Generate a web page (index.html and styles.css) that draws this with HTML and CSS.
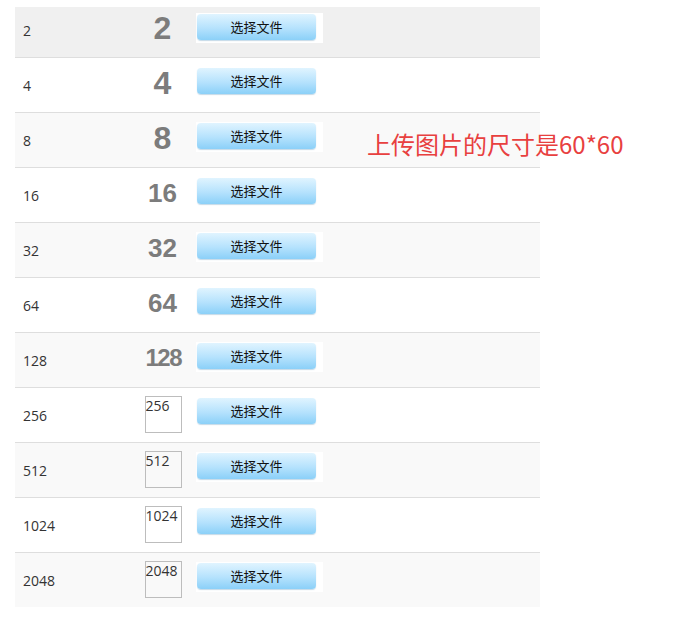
FILE: index.html
```html
<!DOCTYPE html>
<html lang="zh">
<head>
<meta charset="utf-8">
<link rel="stylesheet" href="styles.css">
</head>
<body>
<div class="page">
  <div class="table">
    <div class="row first"><div class="c1">2</div><div class="c2"><span class="big d1">2</span></div><div class="c3"><span class="file"><span class="btn">选择文件</span></span></div></div>
    <div class="row"><div class="c1">4</div><div class="c2"><span class="big d1">4</span></div><div class="c3"><span class="file"><span class="btn">选择文件</span></span></div></div>
    <div class="row alt"><div class="c1">8</div><div class="c2"><span class="big d1">8</span></div><div class="c3"><span class="file"><span class="btn">选择文件</span></span></div></div>
    <div class="row"><div class="c1">16</div><div class="c2"><span class="big d2">16</span></div><div class="c3"><span class="file"><span class="btn">选择文件</span></span></div></div>
    <div class="row alt"><div class="c1">32</div><div class="c2"><span class="big d2">32</span></div><div class="c3"><span class="file"><span class="btn">选择文件</span></span></div></div>
    <div class="row"><div class="c1">64</div><div class="c2"><span class="big d2">64</span></div><div class="c3"><span class="file"><span class="btn">选择文件</span></span></div></div>
    <div class="row alt"><div class="c1">128</div><div class="c2"><span class="big d3">128</span></div><div class="c3"><span class="file"><span class="btn">选择文件</span></span></div></div>
    <div class="row"><div class="c1">256</div><div class="c2"><span class="imgbox">256</span></div><div class="c3"><span class="file"><span class="btn">选择文件</span></span></div></div>
    <div class="row alt"><div class="c1">512</div><div class="c2"><span class="imgbox">512</span></div><div class="c3"><span class="file"><span class="btn">选择文件</span></span></div></div>
    <div class="row"><div class="c1">1024</div><div class="c2"><span class="imgbox">1024</span></div><div class="c3"><span class="file"><span class="btn">选择文件</span></span></div></div>
    <div class="row alt last"><div class="c1">2048</div><div class="c2"><span class="imgbox">2048</span></div><div class="c3"><span class="file"><span class="btn">选择文件</span></span></div></div>
  </div>
  <div class="note">上传图片的尺寸是60*60</div>
</div>
</body>
</html>
```
FILE: styles.css
```css
html, body {
  margin: 0;
  padding: 0;
  background: #fff;
}
.page {
  position: relative;
  padding: 7px 0 0 15px;
  font-family: "Open Sans", "Noto Sans CJK SC", sans-serif;
  color: #333;
}
.table {
  width: 525px;
}
.row {
  display: grid;
  grid-template-columns: 125px 45px 1fr;
  align-items: center;
  height: 54px;
  border-bottom: 1px solid #dedede;
  background: #fff;
}
.row.first {
  height: 50px;
  background: #f0f0f0;
}
.row.alt {
  background: #f9f9f9;
}
.row.last {
  border-bottom: none;
}
.c1 {
  padding-left: 8px;
  font-size: 14px;
}
.row.first .c1 {
  padding-bottom: 4px;
}
.c2 {
  display: flex;
  justify-content: center;
  align-items: center;
}
.big {
  font-family: "Liberation Sans", Arial, sans-serif;
  font-weight: bold;
  color: #7c7c7c;
  line-height: 1;
  margin-bottom: 5px;
}
.row.first .big {
  margin-bottom: 9px;
}
.big.d1 { font-size: 32px; }
.big.d2 { font-size: 26px; }
.big.d3 { font-size: 24px; letter-spacing: -1.5px; margin-right: -1.5px; }
.imgbox {
  box-sizing: border-box;
  width: 37px;
  height: 37px;
  border: 1px solid #bdbdbd;
  font-size: 14px;
  line-height: 18px;
  color: #333;
  overflow: hidden;
  white-space: nowrap;
  margin-left: 1px;
  margin-bottom: 2px;
}
.c3 {
  padding-left: 11px;
  display: flex;
  align-items: center;
}
.file {
  display: block;
  width: 127px;
  height: 30px;
  box-sizing: border-box;
  padding: 1px 0 0 1px;
  background: #fff;
  margin-bottom: 7px;
}
.row.first .file {
  margin-bottom: 9px;
}
.btn {
  display: flex;
  align-items: center;
  justify-content: center;
  width: 119px;
  height: 26px;
  box-sizing: border-box;
  border-radius: 4px;
  background: linear-gradient(#e0f4ff, #b5e2fd 55%, #8bd0f8);
  box-shadow: 0 1px 1px rgba(90, 150, 190, 0.35);
  font-family: "Noto Sans CJK SC", sans-serif;
  font-size: 13px;
  color: #111;
}
.note {
  position: absolute;
  left: 367px;
  top: 132px;
  font-family: "Noto Sans CJK SC", sans-serif;
  font-size: 24px;
  line-height: 24px;
  color: #e8403f;
  white-space: nowrap;
}
```
